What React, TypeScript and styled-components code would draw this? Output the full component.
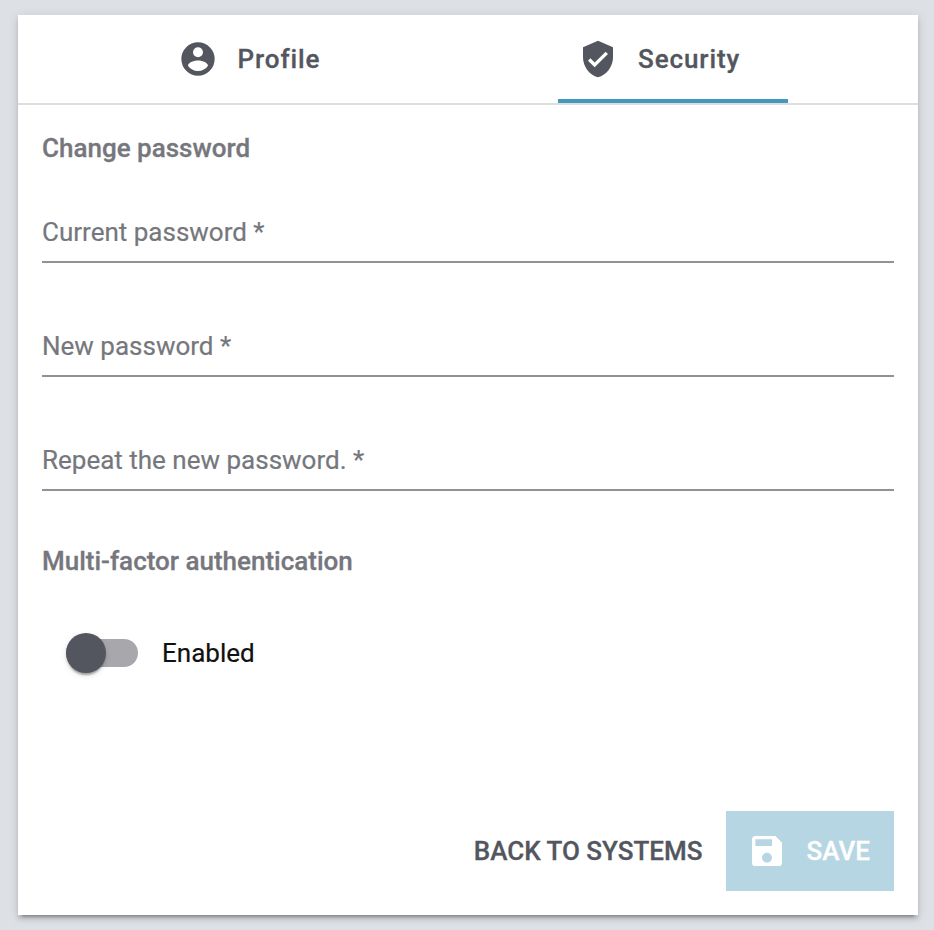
import React from 'react';
import styled, { createGlobalStyle } from 'styled-components';

const Global = createGlobalStyle`
  * { box-sizing: border-box; }
  body {
    margin: 0;
    background: #dde0e5;
    font-family: Roboto, sans-serif;
    font-size: 26px;
    line-height: 32px;
    color: #111;
  }
  button { font: inherit; border: 0; background: none; padding: 0; }
`;

const Page = styled.div`
  height: 930px;
  padding: 15px 16px 15px 18px;
  overflow: hidden;
`;

const Card = styled.main`
  display: flex;
  flex-direction: column;
  height: 900px;
  background: #fff;
  box-shadow: 0 6px 2px -4px rgba(0, 0, 0, 0.2), 0 4px 4px 0 rgba(0, 0, 0, 0.14),
    0 2px 10px 0 rgba(0, 0, 0, 0.12);
`;

const Tabs = styled.nav`
  display: flex;
  justify-content: space-between;
  height: 90px;
  padding: 0 130px 0 139.5px;
  border-bottom: 2px solid #dedede;
`;

const Tab = styled.button<{ $active?: boolean; $width: number }>`
  display: flex;
  align-items: center;
  justify-content: flex-start;
  gap: 20px;
  width: ${(p) => p.$width}px;
  height: 88px;
  border-bottom: 4px solid ${(p) => (p.$active ? '#4398bb' : 'transparent')};
  padding: 4px 0 0 20px;
  color: #53565e;
  font-weight: 500;
  letter-spacing: 0.9px;
  -webkit-text-stroke: 0.3px;
`;

const Icon = styled.svg`
  width: 40px;
  height: 40px;
  flex: none;
  fill: currentColor;
`;

const Form = styled.form`
  display: flex;
  flex-direction: column;
  flex: 1;
  padding: 27px 24px 24px;
`;

const Heading = styled.h3`
  margin: 0;
  font-size: 26px;
  line-height: 32px;
  font-weight: 500;
  color: #76777d;
  -webkit-text-stroke: 0.3px;
`;

const Fields = styled.div`
  display: grid;
  gap: 67px;
  margin: 52px 0 54px;
`;

const Field = styled.label`
  display: block;
  height: 47px;
  border-bottom: 2px solid #929294;
  color: #76777d;
  -webkit-text-stroke: 0.2px;
`;

const Toggle = styled.label`
  display: flex;
  align-items: center;
  gap: 24px;
  margin: 56px 0 0 24px;
  height: 40px;
  -webkit-text-stroke: 0.2px;
`;

const Track = styled.span`
  display: flex;
  align-items: center;
  width: 72px;
  height: 28px;
  border-radius: 14px;
  background: #a7a7ac;
`;

const Thumb = styled.span`
  width: 40px;
  height: 40px;
  flex: none;
  border-radius: 50%;
  background: #53565e;
  box-shadow: 0 4px 2px -2px rgba(0, 0, 0, 0.2), 0 2px 2px 0 rgba(0, 0, 0, 0.14),
    0 2px 6px 0 rgba(0, 0, 0, 0.12);
`;

const Actions = styled.footer`
  display: flex;
  justify-content: flex-end;
  gap: 23.5px;
  height: 80px;
  margin-top: auto;
`;

const BackButton = styled.button`
  color: #53565e;
  font-weight: 500;
  -webkit-text-stroke: 0.3px;
`;

const SaveButton = styled.button`
  display: flex;
  align-items: center;
  gap: 20px;
  width: 168px;
  padding-left: 20.5px;
  background: #b7d6e3;
  color: #fff;
  font-weight: 500;
  -webkit-text-stroke: 0.3px;
`;

const paths = {
  account:
    'M12 2A10 10 0 1 0 12 22A10 10 0 1 0 12 2M12 5A3 3 0 1 1 12 11A3 3 0 1 1 12 5M12 19.2C9.5 19.2 7.29 17.92 6 16C6.03 14 10 12.9 12 12.9C14 12.9 17.97 14 18 16C16.71 17.92 14.5 19.2 12 19.2Z',
  shield:
    'M10 17L6 13L7.41 11.59L10 14.17L16.59 7.58L18 9M12 1L3 5V11C3 16.55 6.84 21.74 12 23C17.16 21.74 21 16.55 21 11V5L12 1Z',
  save: 'M15 9H5V5H15M12 19A3 3 0 0 1 9 16A3 3 0 0 1 12 13A3 3 0 0 1 15 16A3 3 0 0 1 12 19M17 3H5C3.89 3 3 3.9 3 5V19A2 2 0 0 0 5 21H19A2 2 0 0 0 21 19V7L17 3Z',
};

const Glyph = ({ name }: { name: keyof typeof paths }) => (
  <Icon viewBox="0 0 24 24" aria-hidden="true">
    <path fillRule="evenodd" d={paths[name]} />
  </Icon>
);

export default function App() {
  return (
    <>
      <Global />
      <Page>
        <Card>
          <Tabs>
            <Tab $width={184}>
              <Glyph name="account" />
              <span>Profile</span>
            </Tab>
            <Tab $width={230} $active>
              <Glyph name="shield" />
              <span>Security</span>
            </Tab>
          </Tabs>
          <Form>
            <Heading>Change password</Heading>
            <Fields>
              <Field>Current password *</Field>
              <Field>New password *</Field>
              <Field>Repeat the new password. *</Field>
            </Fields>
            <Heading>Multi-factor authentication</Heading>
            <Toggle>
              <Track>
                <Thumb />
              </Track>
              <span>Enabled</span>
            </Toggle>
            <Actions>
              <BackButton type="button">BACK TO SYSTEMS</BackButton>
              <SaveButton type="button">
                <Glyph name="save" />
                <span>SAVE</span>
              </SaveButton>
            </Actions>
          </Form>
        </Card>
      </Page>
    </>
  );
}
